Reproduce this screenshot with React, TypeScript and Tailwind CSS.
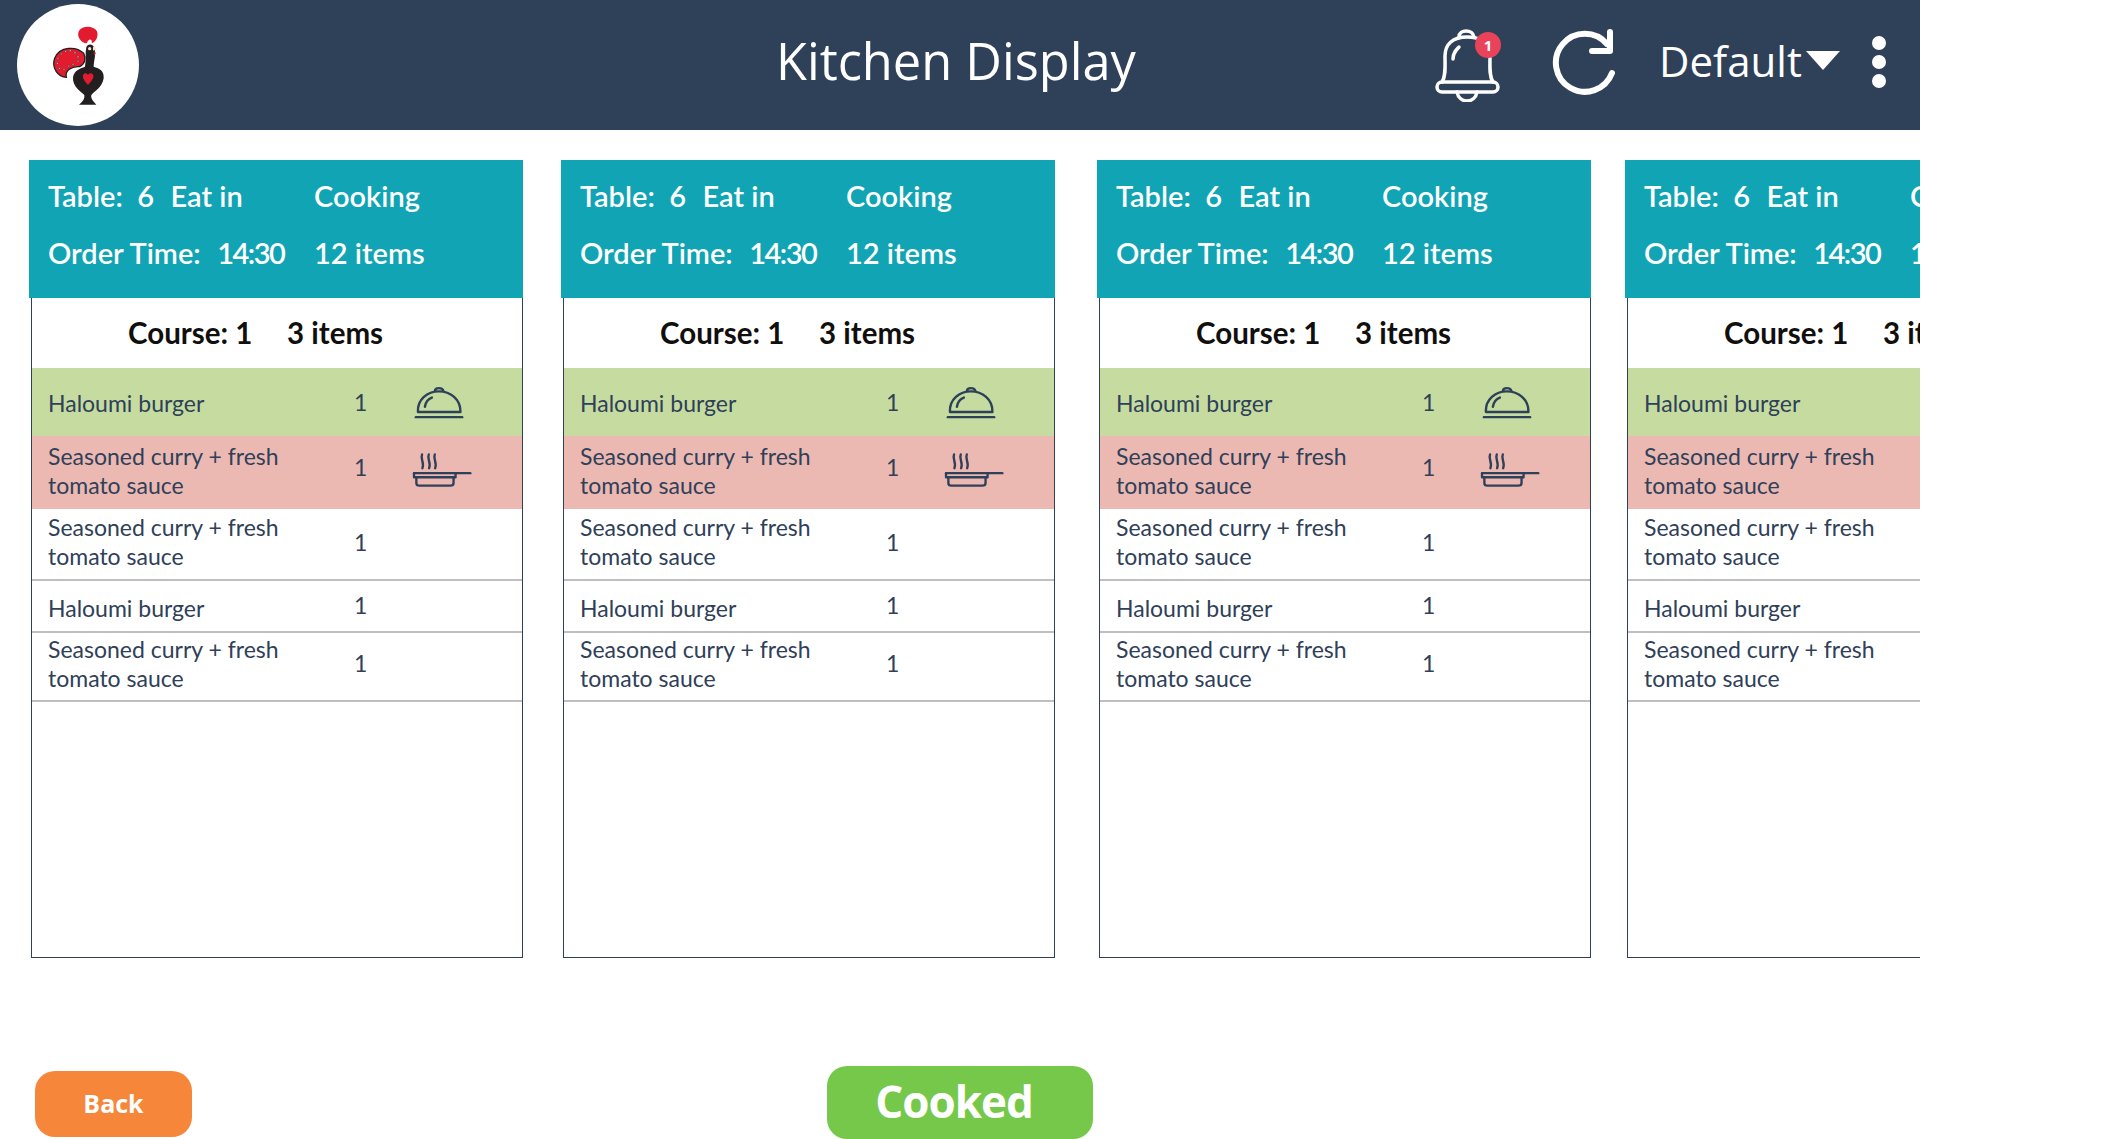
const rows = [
  { name: ['Haloumi burger'], wrap: 'h-[68px] bg-[#c5db9f]', nameOffset: 'pt-[2px]', qtyOffset: '', icon: 'cloche' },
  { name: ['Seasoned curry + fresh', 'tomato sauce'], wrap: 'h-[73px] bg-[#ecb8b2]', nameOffset: 'pb-[4px]', qtyOffset: 'pb-[10px]', icon: 'pan' },
  { name: ['Seasoned curry + fresh', 'tomato sauce'], wrap: 'h-[72px] border-b-2 border-[#bfbfbf]', nameOffset: 'pb-[5px]', qtyOffset: 'pb-[4px]', icon: '' },
  { name: ['Haloumi burger'], wrap: 'h-[52px] border-b-2 border-[#bfbfbf]', nameOffset: 'pt-[4px]', qtyOffset: 'pb-[2px]', icon: '' },
  { name: ['Seasoned curry + fresh', 'tomato sauce'], wrap: 'h-[69px] border-b-2 border-[#bfbfbf]', nameOffset: 'pb-[6px]', qtyOffset: 'pb-[6px]', icon: '' },
];

const Rooster = () => (
  <svg viewBox="22 12 366 366" className="w-full h-full">
    <path d="M222 160 C200 138 150 138 135 175 C125 205 145 230 170 232 C165 212 185 198 210 200 C226 192 230 175 222 160Z" fill="#e31b2f" stroke="#231f20" strokeWidth="4" />
    <g fill="#fff" stroke="#231f20" strokeWidth="1.5">
      <circle cx="145" cy="175" r="2.5" /><circle cx="143" cy="190" r="2.5" /><circle cx="150" cy="205" r="2.5" />
      <circle cx="163" cy="208" r="2.5" /><circle cx="155" cy="162" r="2.5" /><circle cx="168" cy="154" r="2.5" />
      <circle cx="182" cy="152" r="2.5" /><circle cx="196" cy="158" r="2.5" /><circle cx="205" cy="170" r="2.5" />
      <circle cx="205" cy="184" r="2.5" /><circle cx="190" cy="193" r="2.5" /><circle cx="177" cy="198" r="2.5" />
    </g>
    <path d="M232 130 C212 128 200 108 208 92 C218 76 252 76 262 94 C268 112 256 128 246 130 C250 118 236 112 232 130Z" fill="#e31b2f" />
    <path d="M230 142 C232 130 252 130 254 145 C260 165 252 185 252 200 C267 205 284 210 282 235 C277 265 252 275 245 285 C242 295 252 305 260 314 L208 314 C220 305 226 295 224 285 C213 275 188 260 190 232 C193 210 213 205 226 200 C230 180 226 160 230 142Z" fill="#231f20" />
    <path d="M235 255 C225 243 218 235 220 226 C223 217 232 218 235 225 C238 218 248 217 251 226 C253 235 245 243 235 255Z" fill="#e31b2f" />
    <circle cx="240" cy="146" r="5" fill="#f3e6cf" />
    <path d="M250 140 L262 146 L250 152Z" fill="#f3e6cf" />
    <path d="M251 156 L259 158 L254 168Z" fill="#b5202c" />
  </svg>
);

const Bell = () => (
  <div className="relative w-[65px] h-[76px] shrink-0 mb-[2px]">
    <svg viewBox="0 0 65 76" className="w-full h-full" fill="none" stroke="#fff" strokeWidth="3.5" strokeLinecap="round" strokeLinejoin="round">
      <path d="M7 56 C11 50 10 40 10 30 C10 18 18 11 32 11 C46 11 54 18 55 30 C55 40 54 50 58 56" />
      <rect x="2" y="56" width="61" height="10" rx="5" />
      <path d="M24 11 C24 3 38 3 39 11" />
      <path d="M22 66 C24 78 40 78 42 66" />
      <path d="M18 33 C18 27 21 24 24 21" />
    </svg>
    <span className="absolute left-[40px] top-[6px] w-[26px] h-[26px] rounded-full bg-[#e8435a] text-white text-[15px] font-bold flex items-center justify-center font-['Open_Sans',sans-serif]">1</span>
  </div>
);

const Refresh = () => (
  <svg viewBox="0 0 70 72" className="w-[70px] h-[72px] shrink-0 mb-[3px]" fill="none" stroke="#fff" strokeWidth="6" strokeLinecap="round" strokeLinejoin="round">
    <path d="M60 45 A29 29 0 1 1 55 16" />
    <path d="M58 4 V23 H40" />
  </svg>
);

const Cloche = () => (
  <svg viewBox="70 50 155 100" className="w-[54px] h-[35px] ml-[3px]" fill="none" stroke="#2f4059" strokeWidth="7" strokeLinecap="round" strokeLinejoin="round">
    <path d="M87 127 C85 90 115 68 147 68 C180 68 210 90 209 127 Z" />
    <path d="M136 67 C136 56 158 56 160 67" />
    <path d="M107 112 C109 100 116 90 127 86" />
    <path d="M81 142 H214" />
  </svg>
);

const Pan = () => (
  <svg viewBox="65 245 185 110" className="w-[62px] h-[37px] ml-[2px] mb-[6px]" fill="none" stroke="#2f4059" strokeWidth="7" strokeLinecap="round" strokeLinejoin="round">
    <path d="M98 255 C92 268 106 280 99 296" />
    <path d="M118 255 C112 268 126 280 119 296" />
    <path d="M136 255 C130 268 144 280 137 296" />
    <path d="M74 311 H242" />
    <path d="M74 311 V323 H198 V311" />
    <path d="M81 325 V340 C81 345 85 348 90 348 H182 C188 348 192 345 192 340 V325" />
  </svg>
);

const OrderCard = ({ gap }: { gap: string }) => (
  <div className={`${gap} w-[494px] h-[798px] shrink-0 flex flex-col font-['Lato',sans-serif]`}>
    <div className="h-[138px] bg-[#11a4b4] text-white text-[29px] font-semibold pl-[19px] pt-[14px] flex flex-col gap-[14px] leading-[43px]">
      <div className="flex">
        <span className="w-[266px] whitespace-pre">Table:  6  <span className="ml-[2px]">Eat in</span></span>
        <span>Cooking</span>
      </div>
      <div className="flex">
        <span className="w-[266px] whitespace-pre">Order Time:  <span className="ml-[2px] tracking-[-1.5px]">14:30</span></span>
        <span>12 items</span>
      </div>
    </div>
    <div className="flex-1 ml-[2px] border-x border-b border-[#2f4059] flex flex-col">
      <div className="h-[70px] shrink-0 flex items-center pl-[96px] text-[#110f0d] text-[29.5px] font-bold">
        <span className="w-[159px]">Course: 1</span>
        <span className="whitespace-nowrap">3 items</span>
      </div>
      {rows.map((row, i) => (
        <div key={i} className={`${row.wrap} shrink-0 flex items-center pl-[16px] text-[#2f4059] text-[23px] leading-[29px]`}>
          <div className={`w-[306px] ${row.nameOffset}`}>
            {row.name.map(line => <div key={line}>{line}</div>)}
          </div>
          <span className={`w-[55px] ${row.qtyOffset}`}>1</span>
          {row.icon === 'cloche' && <Cloche />}
          {row.icon === 'pan' && <Pan />}
        </div>
      ))}
    </div>
  </div>
);

export default function App() {
  return (
    <div className="w-[2119px] h-[1139px] overflow-hidden bg-white">
      <div className="w-[1920px]">
        <header className="h-[130px] bg-[#2f4059] flex items-center text-white font-['Open_Sans',sans-serif]">
          <div className="w-[122px] h-[122px] ml-[17px] rounded-full bg-white shrink-0">
            <Rooster />
          </div>
          <h1 className="ml-[637px] w-[659px] pb-[8px] text-[50.5px] leading-none whitespace-nowrap">Kitchen Display</h1>
          <Bell />
          <div className="ml-[52px]"><Refresh /></div>
          <span className="ml-[37px] pb-[9px] text-[42px] leading-none">Default</span>
          <span className="ml-[4px] mb-[9px] w-0 h-0 border-x-[17px] border-x-transparent border-t-[19px] border-t-white" />
          <div className="ml-[32px] mb-[6px] flex flex-col gap-[5px]">
            <span className="w-[14px] h-[14px] rounded-full bg-white" />
            <span className="w-[14px] h-[14px] rounded-full bg-white" />
            <span className="w-[14px] h-[14px] rounded-full bg-white" />
          </div>
        </header>
        <div className="flex overflow-hidden pt-[30px] pl-[29px]">
          <OrderCard gap="" />
          <OrderCard gap="ml-[38px]" />
          <OrderCard gap="ml-[42px]" />
          <OrderCard gap="ml-[34px]" />
        </div>
        <div className="flex items-start mt-[108px] pl-[35px] font-['Open_Sans',sans-serif] text-white font-bold">
          <button className="mt-[5px] w-[157px] h-[66px] rounded-[20px] bg-[#f6863a] text-[25px]">Back</button>
          <button className="ml-[635px] w-[266px] h-[73px] pr-[12px] pb-[4px] rounded-[20px] bg-[#76c84a] text-[44px] tracking-[-1px] leading-none">Cooked</button>
        </div>
      </div>
    </div>
  );
}
